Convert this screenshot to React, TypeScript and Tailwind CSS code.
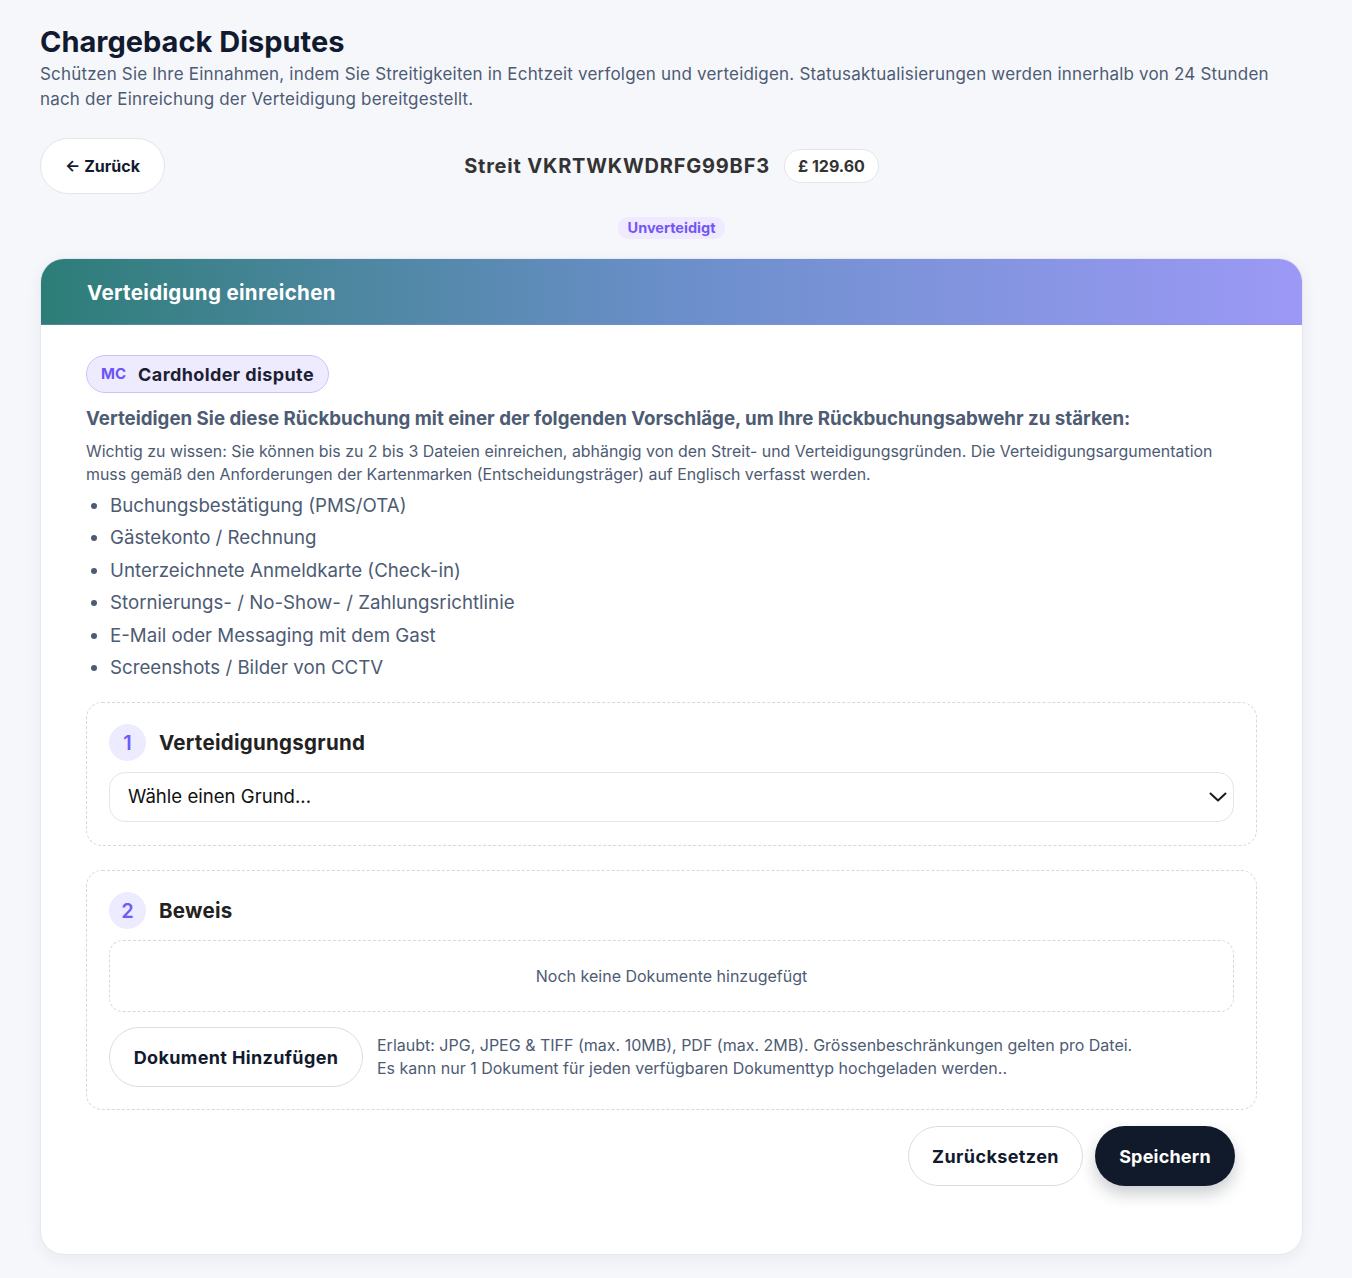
import React from "react";

const font = { fontFamily: "Inter, 'Noto Sans', sans-serif" };

function StepCircle({ n }: { n: number }) {
  return (
    <div className="flex h-[37px] w-[37px] items-center justify-center rounded-full bg-[#ecebff] text-[20px] font-semibold text-[#6d5cf6]">
      {n}
    </div>
  );
}

export default function App() {
  const bullets = [
    "Buchungsbestätigung (PMS/OTA)",
    "Gästekonto / Rechnung",
    "Unterzeichnete Anmeldkarte (Check-in)",
    "Stornierungs- / No-Show- / Zahlungsrichtlinie",
    "E-Mail oder Messaging mit dem Gast",
    "Screenshots / Bilder von CCTV",
  ];
  return (
    <div className="min-h-[1278px] bg-[#f6f7fb] px-10 pt-6 pb-6" style={font}>
      <h1 className="text-[29px] font-bold leading-9 text-[#111a2e]">Chargeback Disputes</h1>
      <p className="mt-[2px] w-[1240px] text-[17px] leading-[24.5px] tracking-[0.19px] text-[#4d5b73]">
        Schützen Sie Ihre Einnahmen, indem Sie Streitigkeiten in Echtzeit verfolgen und verteidigen. Statusaktualisierungen werden innerhalb von 24 Stunden nach der Einreichung der Verteidigung bereitgestellt.
      </p>

      <div className="mt-[27px] grid w-[1263px] grid-cols-[1fr_auto_1fr] items-center">
        <div>
          <button className="flex h-14 w-[125px] items-center justify-center rounded-full border border-[#e2e4ea] bg-white text-[16px] font-bold text-[#111a2e]">
            ← Zurück
          </button>
        </div>
        <div className="flex items-center gap-[14px]">
          <span className="text-[20px] font-bold tracking-[0.8px] text-[#333333]">Streit VKRTWKWDRFG99BF3</span>
          <span className="flex h-[34px] items-center rounded-full border border-[#e3e5ea] bg-white px-[13px] text-[16px] font-bold text-[#333333]">
            £ 129.60
          </span>
        </div>
        <div />
      </div>

      <div className="mt-[23px] flex w-[1263px] justify-center">
        <span className="flex h-[22px] items-center rounded-full bg-[#efeaff] px-[10px] text-[14.5px] font-bold text-[#7357f5]">
          Unverteidigt
        </span>
      </div>

      <div className="mt-[19px] w-[1263px] overflow-hidden rounded-[24px] border border-[#e6e8ee] bg-white shadow-[0_4px_16px_rgba(30,40,80,0.06)]">
        <div className="flex h-[66px] items-center border-b border-[#8b8fe0]/40 bg-linear-to-r from-[#2c7d78] via-[#6a8fca] to-[#9c99f6] px-[46px] pt-[4px]">
          <h2 className="text-[20.5px] font-bold tracking-[0.35px] text-white">Verteidigung einreichen</h2>
        </div>

        <div className="px-[45px] pt-[30px] pb-[68px]">
          <div className="inline-flex h-[38px] items-center gap-[12px] rounded-full border border-[#c9c3fb] bg-[#eeebff] px-[14px]">
            <span className="text-[15px] font-bold text-[#6d55f5]">MC</span>
            <span className="text-[18px] font-bold tracking-[0.4px] text-[#1c1f33]">Cardholder dispute</span>
          </div>

          <h3 className="mt-[12px] text-[18.7px] font-bold leading-7 text-[#4d5b73]">
            Verteidigen Sie diese Rückbuchung mit einer der folgenden Vorschläge, um Ihre Rückbuchungsabwehr zu stärken:
          </h3>
          <p className="mt-[7px] w-[1145px] text-[15.9px] leading-[23px] text-[#4d5b73]">
            Wichtig zu wissen: Sie können bis zu 2 bis 3 Dateien einreichen, abhängig von den Streit- und Verteidigungsgründen. Die Verteidigungsargumentation muss gemäß den Anforderungen der Kartenmarken (Entscheidungsträger) auf Englisch verfasst werden.
          </p>
          <ul className="mt-[4px] list-disc pl-6 text-[18.7px] leading-[32.4px] text-[#4d5b73] marker:text-[#4d5b73]">
            {bullets.map((b) => (
              <li key={b}>{b}</li>
            ))}
          </ul>

          <div className="mt-[18px] rounded-[16px] border border-dashed border-[#d6d8dd] px-[22px] pt-[21px] pb-[23px]">
            <div className="flex items-center gap-[13px]">
              <StepCircle n={1} />
              <span className="text-[20.5px] font-bold tracking-[0.28px] text-[#222222]">Verteidigungsgrund</span>
            </div>
            <div className="mt-[11px] flex h-[50px] items-center justify-between rounded-[16px] border border-[#e4e5e8] bg-white pl-[18px] pr-[6px]">
              <span className="text-[18.6px] text-[#111111]">Wähle einen Grund...</span>
              <svg width="18" height="10" viewBox="0 0 18 10" fill="none" stroke="#1a1a1a" strokeWidth="2" strokeLinecap="round" strokeLinejoin="round">
                <path d="M1.5 1.5L9 8.5L16.5 1.5" />
              </svg>
            </div>
          </div>

          <div className="mt-[24px] rounded-[16px] border border-dashed border-[#d6d8dd] px-[22px] pt-[21px] pb-[22px]">
            <div className="flex items-center gap-[13px]">
              <StepCircle n={2} />
              <span className="text-[20.5px] font-bold tracking-[0.28px] text-[#222222]">Beweis</span>
            </div>
            <div className="mt-[11px] flex h-[72px] items-center justify-center rounded-[14px] border border-dashed border-[#d6d8dd]">
              <span className="text-[16px] text-[#4d5b73]">Noch keine Dokumente hinzugefügt</span>
            </div>
            <div className="mt-[15px] flex items-center gap-[14px]">
              <button className="flex h-[60px] w-[254px] items-center justify-center rounded-full border border-[#dcdde1] bg-white text-[18px] font-bold tracking-[0.37px] text-[#111a2e]">
                Dokument Hinzufügen
              </button>
              <div className="text-[16px] leading-[23px] text-[#4d5b73]">
                <div>Erlaubt: JPG, JPEG &amp; TIFF (max. 10MB), PDF (max. 2MB). Grössenbeschränkungen gelten pro Datei.</div>
                <div>Es kann nur 1 Dokument für jeden verfügbaren Dokumenttyp hochgeladen werden..</div>
              </div>
            </div>
          </div>

          <div className="mt-[16px] flex justify-end gap-3 pr-[22px]">
            <button className="flex h-[60px] w-[175px] items-center justify-center rounded-full border border-[#dcdde1] bg-white text-[18px] font-bold tracking-[0.4px] text-[#111a2e]">
              Zurücksetzen
            </button>
            <button className="flex h-[60px] w-[140px] items-center justify-center rounded-full bg-[#111a2b] text-[18px] font-bold tracking-[0.2px] text-white shadow-[0_8px_16px_rgba(17,26,43,0.22)]">
              Speichern
            </button>
          </div>
        </div>
      </div>
    </div>
  );
}
